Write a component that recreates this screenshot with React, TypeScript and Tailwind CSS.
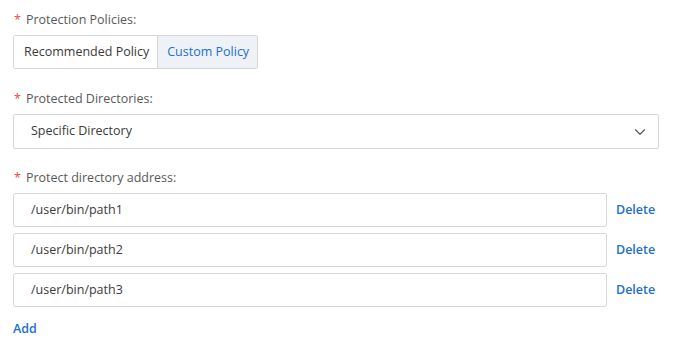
import { ChevronDown } from 'lucide-react';

const font = { fontFamily: '"Open Sans", "Noto Sans", sans-serif' };

function Label({ text }: { text: string }) {
  return (
    <div className="flex items-center h-[20px] text-[12.5px] text-[#595959] mb-[5px]">
      <span className="text-[#e54d42] mr-[5px] ml-[1px]">*</span>
      {text}
    </div>
  );
}

const paths = ['/user/bin/path1', '/user/bin/path2', '/user/bin/path3'];

export default function App() {
  return (
    <div className="w-[680px] h-[354px] bg-white pl-[13px] pt-[10px] text-[12.5px] text-[#3a3a3a]" style={font}>
      <Label text="Protection Policies:" />
      <div className="flex w-fit h-[34px] border border-[#d7d8d9] rounded-[2px] overflow-hidden">
        <div className="flex items-center pl-[10px] pr-[8px] bg-white">Recommended Policy</div>
        <div className="flex items-center pl-[9px] pr-[8px] text-[#1b6fd0] bg-[#eef1f6] border-l border-[#d7d8d9]">
          Custom Policy
        </div>
      </div>

      <div className="mt-[20px]">
        <Label text="Protected Directories:" />
        <div className="flex items-center justify-between w-[646px] h-[35px] border border-[#d7d8d9] rounded-[2px] pl-[17px] pr-[9px]">
          <span>Specific Directory</span>
          <ChevronDown size={18} strokeWidth={1.5} className="text-[#555]" />
        </div>
      </div>

      <div className="mt-[19px]">
        <Label text="Protect directory address:" />
        <div className="flex flex-col gap-[6px]">
          {paths.map((p) => (
            <div key={p} className="flex items-center">
              <div className="flex items-center w-[594px] h-[34px] border border-[#d7d8d9] rounded-[2px] pl-[17px]">
                {p}
              </div>
              <span className="ml-[9px] text-[#1b6fd0] font-semibold">Delete</span>
            </div>
          ))}
        </div>
        <div className="mt-[12px] h-[20px] flex items-center text-[#1b6fd0] font-semibold">Add</div>
      </div>
    </div>
  );
}
